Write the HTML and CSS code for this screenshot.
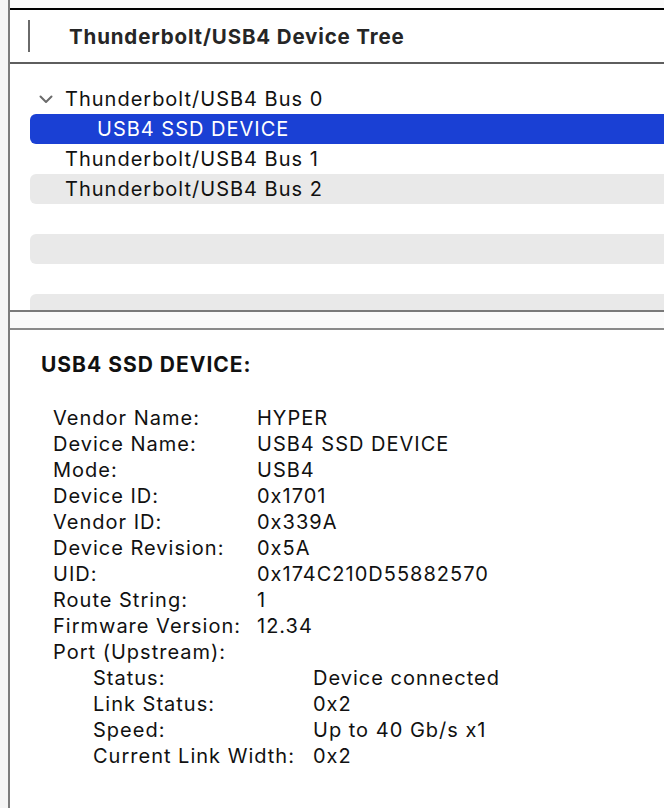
FILE: index.html
```html
<!DOCTYPE html>
<html>
<head>
<meta charset="utf-8">
<link rel="stylesheet" href="styles.css">
</head>
<body>
<div class="frame">
  <div class="pane">
    <div class="topgap"></div>
    <div class="header">
      <span class="tick"></span>
      <span class="title">Thunderbolt/USB4 Device Tree</span>
    </div>
    <div class="tree">
      <div class="row">
        <svg class="chev" width="14" height="9" viewBox="0 0 14 9"><path d="M1.5 1.5 L7 7 L12.5 1.5" fill="none" stroke="#6b6b6b" stroke-width="2" stroke-linecap="round" stroke-linejoin="round"/></svg>
        <span>Thunderbolt/USB4 Bus 0</span>
      </div>
      <div class="row selected child"><span>USB4 SSD DEVICE</span></div>
      <div class="row"><span>Thunderbolt/USB4 Bus 1</span></div>
      <div class="row stripe"><span>Thunderbolt/USB4 Bus 2</span></div>
      <div class="row"></div>
      <div class="row stripe"></div>
      <div class="row"></div>
      <div class="row stripe"></div>
    </div>
    <div class="splitter"></div>
    <div class="details">
      <h2 class="dtitle">USB4 SSD DEVICE:</h2>
      <div class="props">
        <span>Vendor Name:</span><span>HYPER</span>
        <span>Device Name:</span><span>USB4 SSD DEVICE</span>
        <span>Mode:</span><span>USB4</span>
        <span>Device ID:</span><span>0x1701</span>
        <span>Vendor ID:</span><span>0x339A</span>
        <span>Device Revision:</span><span>0x5A</span>
        <span>UID:</span><span>0x174C210D55882570</span>
        <span>Route String:</span><span>1</span>
        <span>Firmware Version:</span><span>12.34</span>
        <span class="full">Port (Upstream):</span>
      </div>
      <div class="props sub">
        <span>Status:</span><span>Device connected</span>
        <span>Link Status:</span><span>0x2</span>
        <span>Speed:</span><span>Up to 40 Gb/s x1</span>
        <span>Current Link Width:</span><span>0x2</span>
      </div>
    </div>
  </div>
</div>
</body>
</html>
```
FILE: styles.css
```css
html, body {
  margin: 0;
  padding: 0;
  height: 100%;
}
body {
  background: #f5f5f5;
  font-family: Inter, "Liberation Sans", sans-serif;
  color: #1a1a1a;
  overflow: hidden;
}
.frame {
  height: 808px;
  padding-left: 8px;
}
.pane {
  height: 100%;
  border-left: 2px solid #7c7c7c;
  background: #ffffff;
  overflow: hidden;
}
.topgap {
  height: 8px;
  background: #fafafa;
}
.header {
  height: 52px;
  border-top: 2px solid #000000;
  border-bottom: 2px solid #5e5e5e;
  display: flex;
  align-items: center;
  box-sizing: content-box;
}
.tick {
  width: 2px;
  height: 32px;
  background: #6a6a6a;
  margin-left: 18px;
  align-self: flex-start;
  margin-top: 10px;
}
.title {
  margin-left: 39px;
  font-weight: 700;
  font-size: 20.5px;
  letter-spacing: 0.85px;
  color: #262626;
}
.tree {
  height: 246px;
  padding-top: 20px;
  box-sizing: border-box;
  overflow: hidden;
}
.row {
  height: 30px;
  margin-left: 20px;
  border-radius: 6px 0 0 6px;
  display: flex;
  align-items: center;
  padding-left: 35px;
  font-size: 20px;
  letter-spacing: 1px;
  color: #111111;
  position: relative;
  flex-shrink: 0;
}
.chev {
  position: absolute;
  left: 9px;
  top: 11px;
}
.row.stripe {
  background: #e9e9e9;
}
.row.selected {
  background: #1a40d4;
  color: #ffffff;
}
.row.child {
  padding-left: 67px;
}
.splitter {
  height: 16px;
  border-top: 2px solid #7a7a7a;
  border-bottom: 2px solid #8a8a8a;
  background: #fafafa;
}
.details {
  padding: 22px 0 0 31px;
}
.dtitle {
  margin: 0 0 27px 0;
  font-size: 21px;
  letter-spacing: 1px;
  font-weight: 700;
  color: #111111;
  line-height: 26px;
}
.props {
  display: grid;
  grid-template-columns: 204px 1fr;
  margin-left: 12px;
  font-size: 20px;
  letter-spacing: 1px;
  line-height: 26px;
  color: #111111;
}
.props .full {
  grid-column: 1 / 3;
}
.props.sub {
  margin-left: 52px;
  grid-template-columns: 220px 1fr;
}
```
